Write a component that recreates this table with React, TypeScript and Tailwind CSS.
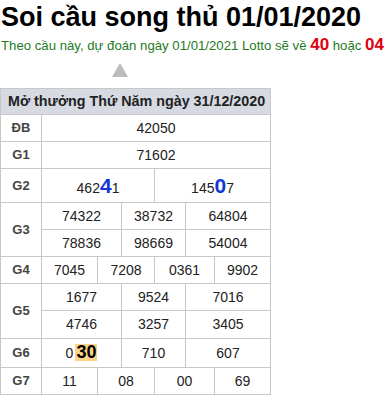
import React from "react";

const font = { fontFamily: '"Liberation Sans", Arial, sans-serif' };

function Hot({ children }: { children: React.ReactNode }) {
  return <span className="text-[21px] font-bold text-[#1537d6]">{children}</span>;
}

function Label({ children, rows }: { children: React.ReactNode; rows?: number }) {
  return (
    <td
      rowSpan={rows}
      className="border border-[#c8c8c8] text-center text-[13px] font-bold text-[#444]"
    >
      {children}
    </td>
  );
}

function Cell({ children, span }: { children: React.ReactNode; span: number }) {
  return (
    <td colSpan={span} className="border border-[#c8c8c8] text-center text-[14px] text-[#222]">
      {children}
    </td>
  );
}

export default function App() {
  return (
    <div className="w-[388px] h-[397px] bg-white overflow-hidden" style={font}>
      <h1 className="pl-[1px] text-[27px] font-bold leading-[35px] text-black">
        Soi cầu song thủ 01/01/2020
      </h1>
      <div className="pl-[1px] text-[13.2px] leading-[20px] text-[#1e7b1e] whitespace-nowrap">
        Theo cầu này, dự đoán ngày 01/01/2021 Lotto sẽ về{" "}
        <span className="text-[17px] font-bold text-[#e0000f]">40</span> hoặc{" "}
        <span className="text-[17px] font-bold text-[#e0000f]">04</span>
      </div>
      {/* arrow */}
      <div className="ml-[112px] mt-[7px] h-0 w-0 border-l-[8px] border-r-[8px] border-b-[14px] border-l-transparent border-r-transparent border-b-[#bdbdbd]" />
      <table className="mt-[11px] w-[270px] table-fixed border-collapse">
        <colgroup>
          <col className="w-[41px]" />
          <col className="w-[56px]" />
          <col className="w-[24px]" />
          <col className="w-[33px]" />
          <col className="w-[31px]" />
          <col className="w-[29px]" />
          <col className="w-[56px]" />
        </colgroup>
        <tbody>
          <tr className="h-[26px]">
            <th
              colSpan={7}
              className="border border-[#c8c8c8] bg-[#d7dae2] pl-[7px] text-left text-[14.3px] font-bold text-[#222] whitespace-nowrap"
            >
              Mở thưởng Thứ Năm ngày 31/12/2020
            </th>
          </tr>
          <tr className="h-[27px]">
            <Label>ĐB</Label>
            <Cell span={6}>42050</Cell>
          </tr>
          <tr className="h-[27px]">
            <Label>G1</Label>
            <Cell span={6}>71602</Cell>
          </tr>
          <tr className="h-[34px]">
            <Label>G2</Label>
            <Cell span={3}>
              462<Hot>4</Hot>1
            </Cell>
            <Cell span={3}>
              145<Hot>0</Hot>7
            </Cell>
          </tr>
          <tr className="h-[27px]">
            <Label rows={2}>G3</Label>
            <Cell span={2}>74322</Cell>
            <Cell span={2}>38732</Cell>
            <Cell span={2}>64804</Cell>
          </tr>
          <tr className="h-[27px]">
            <Cell span={2}>78836</Cell>
            <Cell span={2}>98669</Cell>
            <Cell span={2}>54004</Cell>
          </tr>
          <tr className="h-[27px]">
            <Label>G4</Label>
            <Cell span={1}>7045</Cell>
            <Cell span={2}>7208</Cell>
            <Cell span={2}>0361</Cell>
            <Cell span={1}>9902</Cell>
          </tr>
          <tr className="h-[27px]">
            <Label rows={2}>G5</Label>
            <Cell span={2}>1677</Cell>
            <Cell span={2}>9524</Cell>
            <Cell span={2}>7016</Cell>
          </tr>
          <tr className="h-[28px]">
            <Cell span={2}>4746</Cell>
            <Cell span={2}>3257</Cell>
            <Cell span={2}>3405</Cell>
          </tr>
          <tr className="h-[29px]">
            <Label>G6</Label>
            <Cell span={2}>
              0
              <span className="ml-[2px] inline-block bg-[#fbd487] px-[1px] text-[18px] font-bold leading-[17px] text-black">
                30
              </span>
            </Cell>
            <Cell span={2}>710</Cell>
            <Cell span={2}>607</Cell>
          </tr>
          <tr className="h-[27px]">
            <Label>G7</Label>
            <Cell span={1}>11</Cell>
            <Cell span={2}>08</Cell>
            <Cell span={2}>00</Cell>
            <Cell span={1}>69</Cell>
          </tr>
        </tbody>
      </table>
    </div>
  );
}
